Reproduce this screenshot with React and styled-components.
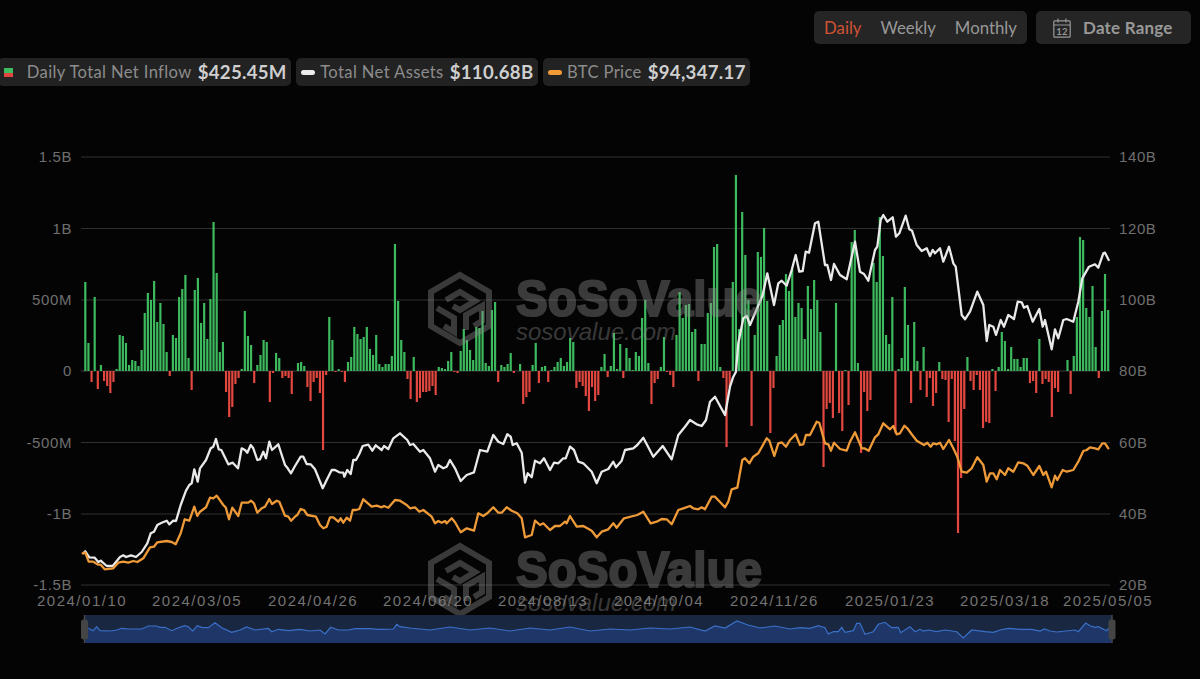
import React from "react";
import styled, { createGlobalStyle } from "styled-components";

const GlobalStyle = createGlobalStyle`
  html, body {
    margin: 0;
    background: #040404;
  }
  body {
    font-family: Lato, "Open Sans", sans-serif;
    overflow: hidden;
  }
`;

const Page = styled.div`
  width: 1200px;
  height: 679px;
  display: flex;
  flex-direction: column;
  overflow: hidden;
`;
const Toolbar = styled.div`
  display: flex;
  justify-content: flex-end;
  gap: 9px;
  padding: 11px 9px 0 0;
`;
const Segment = styled.div`
  display: flex;
  align-items: center;
  gap: 19px;
  width: 213px;
  height: 33px;
  box-sizing: border-box;
  padding: 0 10px;
  background: #252525;
  border-radius: 5px;
`;
const SegmentItem = styled.span`
  font-size: 16.8px;
  color: ${(p) => (p.$active ? "#cf5234" : "#989898")};
`;
const DateButton = styled.div`
  display: flex;
  align-items: center;
  gap: 12px;
  width: 155px;
  height: 33px;
  box-sizing: border-box;
  padding-left: 17px;
  background: #252525;
  border-radius: 5px;
  font-size: 17px;
  font-weight: 700;
  letter-spacing: 0.2px;
  color: #989898;
`;
const Legend = styled.div`
  display: flex;
  gap: 5px;
  margin-top: 14px;
  margin-left: -2px;
`;
const LegendPill = styled.div`
  display: flex;
  align-items: center;
  height: 28px;
  padding: 0 4.75px;
  background: #222222;
  border-radius: 5px;
  white-space: nowrap;
`;
const Swatch = styled.span`
  flex: none;
  width: 9px;
  height: 9px;
  margin: 0 14px 0 1px;
  background: linear-gradient(#3fbb60 0 55%, #e0483f 55% 100%);
`;
const LineKey = styled.span`
  flex: none;
  width: 14px;
  height: 5px;
  margin-right: 5px;
  border-radius: 3px;
  background: ${(p) => p.$color};
`;
const LegendLabel = styled.span`
  font-size: 16.6px;
  letter-spacing: 0.365px;
  color: #8c8c8c;
`;
const LegendValue = styled.span`
  margin-left: 6px;
  font-size: 18.6px;
  font-weight: 700;
  letter-spacing: 0.3px;
  color: #cfcfcf;
`;
const Chart = styled.svg`
  display: block;
  flex: none;
`;
const GridLine = styled.line`
  stroke: ${(p) => (p.$zero ? "#3c3c3c" : "#303030")};
  stroke-width: 1;
`;
const Bar = styled.rect`
  fill: ${(p) => (p.$down ? "#e2483f" : "#3dba5e")};
`;
const AxisText = styled.text`
  font-family: "Liberation Sans", Arial, sans-serif;
  font-size: 15px;
  letter-spacing: 0.6px;
  fill: #6f6f6f;
`;
const DateText = styled(AxisText)`
  letter-spacing: 1.5px;
  fill: #737373;
`;
const Series = styled.polyline`
  fill: none;
  stroke: ${(p) => p.$color};
  stroke-width: 2.3;
  stroke-linejoin: round;
  stroke-linecap: round;
`;
const WatermarkName = styled.text`
  font-family: "Liberation Sans", Arial, sans-serif;
  font-size: 50px;
  font-weight: 700;
  fill: #8c8c8c;
  stroke: #8c8c8c;
  stroke-width: 2.2;
  opacity: 0.4;
`;
const WatermarkUrl = styled.text`
  font-family: "Liberation Sans", Arial, sans-serif;
  font-size: 24px;
  font-style: italic;
  fill: #8c8c8c;
  opacity: 0.38;
`;
const WatermarkMark = styled.g`
  fill: none;
  stroke: #8c8c8c;
  stroke-width: 6;
  opacity: 0.4;
`;

// bar heights in px from the zero line, one per trading day
const flows = [
  89,28,-11,74,-18,6,-10,-15,-22,-11,2,36,35,28,6,11,10,5,21,58,78,71,90,49,68,47,19,-5,36,33,74,82,96,13,-19,81,93,48,68,32,72,149,98,19,29,
  -21,-46,-36,-13,-7,2,60,35,26,-12,6,16,31,29,-31,-2,18,13,-7,-5,-7,-23,0,8,9,5,-16,-30,-11,-7,-22,-79,-4,54,31,-1,2,-1,-11,9,14,44,37,32,34,44,22,16,36,7,4,7,7,15,127,70,
  31,19,-8,-28,14,-31,-27,-21,-21,-20,-15,-24,4,3,2,10,19,-1,-2,20,42,31,21,11,44,43,60,8,5,61,69,-11,6,4,7,18,-2,0,7,-33,-26,-21,6,28,-12,4,5,-11,1,4,9,13,5,9,33,29,
  -17,-11,-15,-25,-40,-16,-30,-24,4,17,-6,5,38,2,27,-7,23,13,1,19,15,53,71,8,-33,-12,-8,4,34,-1,-4,-16,36,79,53,66,67,39,42,-10,27,27,58,68,124,127,4,-7,-76,-16,89,196,42,159,116,71,
  -55,36,119,114,143,70,-62,-17,15,46,51,97,80,102,54,68,63,32,85,62,91,71,39,-96,-38,-32,-47,68,-42,-60,1,-34,129,141,8,-82,-21,-40,-29,108,89,154,115,36,27,74,-62,2,13,84,46,-32,49,10,-19,24,-26,-7,-35,-22,9,-8,-9,-51,-8,
  -70,-162,-107,-38,14,-10,-19,-4,-19,-57,-51,-52,2,-20,4,39,30,2,24,12,12,4,13,13,-12,-10,-22,32,-13,-8,-11,-46,-17,-21,0,0,11,-23,15,54,134,131,63,54,85,24,-7,60,97,61,
];

// maps points read at 3x back to page px
const scale = (ox, oy, raw) => {
  const out = [];
  for (let i = 0; i < raw.length; i += 2) {
    out.push(`${(ox + raw[i] / 3).toFixed(1)},${(oy + raw[i + 1] / 3).toFixed(1)}`);
  }
  return out;
};

const netAssets = [
  ...scale(60, 430, [70,370,76,364,88,382,104,383,115,396,122,392,140,408,158,408,180,381,190,376,198,381,213,376,228,381,245,366,262,340,272,310,282,305,292,285,305,278,320,272,328,283,340,272,348,273,362,225,378,182,388,165,395,160,403,118,413,155,420,115,438,90,452,55,460,50,468,27,476,58,484,60,505,103,518,98,534,115,545,55,555,60,562,68,572,45,580,55,592,90,600,88,610,65,618,85,628,35,636,60,655,43,675,105,683,115,693,130,705,108,722,80,730,80,740,102,752,103,765,118,788,175,800,150,815,120,825,120,838,127,850,128,853,140,862,120,872,132,880,90,888,90,898,72,908,48,925,44,937,62,947,46,965,60,972,48,985,57,1000,25]),
  ...scale(400, 420, [0,40,22,60,30,75,40,72,60,95,70,90,90,115,105,155,115,135,130,145,140,140,150,120,165,145,182,183,200,165,222,157,240,90,262,95,280,45,295,65,310,72,322,43,332,50,338,75,350,70,365,98,375,188,383,160,395,172,405,122,420,130,432,115,450,150,462,128,475,130,490,115,497,115,510,80,522,90,535,125,550,130,575,155,590,190,605,155,625,147,640,125,648,142,665,122,675,90,700,85,712,75,730,53,760,110,788,78,815,118,835,45,855,20]),
  ...scale(400, 170, [870,750,890,763,905,768,918,750,930,695,945,680,975,735,990,650,1000,620,1008,605,1015,520,1030,445,1040,437]),
  ...scale(750, 170, [0,465,15,430,38,375,52,310,72,405,85,340,95,332,110,347,125,300,137,255,148,305,158,303,167,245,177,248,195,160,205,155,225,285,232,285,243,330,252,282,270,315,290,328,315,215,330,305,342,312,355,332,375,240,382,230,392,150,400,135,412,155,428,142,438,200,448,190,467,137,478,178,486,182,500,225,515,243,530,235,540,258,548,240,555,250,570,235,580,275,597,230,610,280,617,290,635,435,645,448,660,425,682,365,700,405,710,513,718,465,730,470,738,495,752,450,762,470,775,435,792,447,803,395,815,397,822,413,832,408,848,455,868,417,878,470,885,450,905,538,915,478,925,505,940,450,950,447,970,455,985,395,997,325,1017,290,1035,283,1045,293,1060,250,1065,248,1076,270]),
];

const btcPrice = [
  ...scale(60, 430, [68,370,76,368,86,395,100,395,115,404,122,404,134,418,160,415,175,398,190,395,205,398,220,393,232,396,250,385,270,352,282,350,292,337,320,333,335,336,347,343,362,310,374,268,388,272,403,230,412,258,420,245,438,232,450,203,460,205,470,197,490,225,497,232,507,268,517,233,535,258,545,218,565,218,573,212,582,220,592,248,605,235,615,230,628,207,636,222,650,212,658,215,675,257,685,260,693,272,705,260,712,255,722,237,732,240,742,255,768,260,780,285,790,295,800,290,810,262,820,262,835,275,842,265,850,278,860,263,870,272,878,240,888,240,898,237,910,208,935,230,950,227,965,232,972,228,985,233,1005,210]),
  ...scale(400, 420, [0,242,20,255,30,265,45,262,58,275,70,270,95,290,105,310,115,303,125,308,135,303,140,310,155,295,165,307,182,337,200,325,222,332,235,280,250,288,262,280,280,262,295,278,305,278,320,262,335,272,352,280,365,295,375,352,395,345,405,302,420,315,430,310,450,330,465,318,480,318,495,305,500,310,510,288,530,320,550,318,575,332,590,352,605,335,625,328,640,310,650,323,672,295,700,288,712,285,730,275,752,310,770,305,785,297,800,298,815,313,835,270,850,265,870,258,880,265,895,268,905,262,915,268,935,230,945,230,975,262,985,245,995,208,1012,203,1027,120,1035,115,1048,130,1060,110,1075,100,1100,55,1108,62]),
  ...scale(770, 400, [13,168,25,130,35,127,48,140,60,120,77,103,90,135,100,133,108,105,120,105,140,65,148,68,165,130,175,133,183,152,192,128,210,147,230,152,240,125,255,97,275,145,283,145,296,152,315,112,325,103,340,70,360,88,370,78,380,103,390,100,403,77,412,85,425,103,440,122,462,135,472,128,482,140,490,130,500,133,510,128,520,147,537,120,550,145,562,170,575,215,590,218,605,205,622,172,640,195,650,245,660,220,670,220,680,238,690,210,705,225,715,205,730,215,745,187,760,190,772,197,790,225,808,198,820,225,828,215,845,262,855,227,862,240,878,210,890,215,910,210,925,185,940,153,950,150,960,142,975,145,985,148,997,130,1005,130,1015,145]),
];

const brush = [
  ...scale(0, 580, [265,145,280,152,290,140,300,152,330,153,350,150,365,145,385,147,425,147,445,138,470,138,480,142,495,142,515,152,535,143,555,137,565,140,578,153,592,137,605,142,625,143,645,128,665,143,695,157,720,150,740,141,765,150,805,145,815,155,835,148,865,152,900,148,930,153,960,150,975,162,992,142,1015,150,1045,150,1065,146,1110,146,1135,148,1150,148,1180,147,1190,133,1200,140]),
  "410,628","430,630","450,627","470,630","490,628","510,631","530,628","550,630","570,627","590,631","610,629","630,630","650,628","670,629","690,627","705,631","715,626","725,628","737,621","748,625","760,628","775,626","790,629",
  ...scale(800, 580, [0,143,30,145,55,137,75,143,85,162,100,155,115,155,125,142,135,157,160,152,170,130,180,130,195,163,220,155,235,133,255,127,275,143,295,142,302,158,330,140,345,155,360,148,370,153,385,150,410,155,435,150,470,155,490,174,515,150,555,155,580,157,600,150,625,145,660,148,695,148,720,153,733,147,750,153,770,156,825,150,835,155,857,129,870,137,885,142,895,140,920,152,930,140]),
];

const leftTicks = [
  ["1.5B", 157], ["1B", 228.5], ["500M", 300], ["0", 371], ["-500M", 442.5], ["-1B", 514], ["-1.5B", 585],
];
const rightTicks = ["140B", "120B", "100B", "80B", "60B", "40B", "20B"];
const dates = [
  ["2024/01/10", 37], ["2024/03/05", 152], ["2024/04/26", 268], ["2024/06/20", 383], ["2024/08/13", 498],
  ["2024/10/04", 614], ["2024/11/26", 730], ["2025/01/23", 845], ["2025/03/18", 960], ["2025/05/05", 1063],
];

function Watermark({ dy }) {
  return (
    <g transform={`translate(0 ${dy})`}>
      <WatermarkMark transform="translate(428 272)">
        <path d="M32 3 L61 20 V54 L32 71 L3 54 V20 Z" />
        <path d="M18 28 L32 20 L47 29 L32 38 L25 34" />
        <path d="M9 36 L26 46 V60 L16 54" />
        <path d="M38 58 V43 L54 34 V49 L46 54" />
      </WatermarkMark>
      <WatermarkName x="516" y="316" textLength="246" lengthAdjust="spacingAndGlyphs">SoSoValue</WatermarkName>
      <WatermarkUrl x="516" y="340">sosovalue.com</WatermarkUrl>
    </g>
  );
}

function Brush() {
  const line = brush.join(" ");
  return (
    <g>
      <rect x="85" y="615" width="1027" height="28" fill="#1a2740" />
      <polygon points={`85,643 ${line} 1112,643`} fill="#1e3768" />
      <polyline points={line} fill="none" stroke="#3a70c8" strokeWidth="1.2" />
      {[84.5, 1112].map((x) => (
        <g key={x}>
          <line x1={x} x2={x} y1="615" y2="643" stroke="#4a4a4a" strokeWidth="1.4" />
          <rect x={x - 3.5} y="619.5" width="7" height="20" rx="2.5" fill="#454545" />
        </g>
      ))}
    </g>
  );
}

export default function App() {
  return (
    <Page>
      <GlobalStyle />
      <Toolbar>
        <Segment>
          <SegmentItem $active>Daily</SegmentItem>
          <SegmentItem>Weekly</SegmentItem>
          <SegmentItem>Monthly</SegmentItem>
        </Segment>
        <DateButton>
          <svg width="18" height="20" viewBox="0 0 18 20" fill="none" stroke="#989898" strokeWidth="1.2">
            <rect x="0.8" y="2.8" width="16.4" height="16.4" rx="1" />
            <path d="M0.8 7 H17.2 M5 0.5 V4.5 M13 0.5 V4.5" />
            <text x="9" y="16.8" fontFamily="Lato, sans-serif" fontSize="9.5" fontWeight="700" textAnchor="middle" fill="#989898" stroke="none">12</text>
          </svg>
          Date Range
        </DateButton>
      </Toolbar>

      <Legend>
        <LegendPill>
          <Swatch />
          <LegendLabel>Daily Total Net Inflow</LegendLabel>
          <LegendValue>$425.45M</LegendValue>
        </LegendPill>
        <LegendPill>
          <LineKey $color="#ececec" />
          <LegendLabel>Total Net Assets</LegendLabel>
          <LegendValue>$110.68B</LegendValue>
        </LegendPill>
        <LegendPill>
          <LineKey $color="#f29a35" />
          <LegendLabel>BTC Price</LegendLabel>
          <LegendValue>$94,347.17</LegendValue>
        </LegendPill>
      </Legend>

      <Chart width="1200" height="593" viewBox="0 86 1200 593">
        {leftTicks.map(([label, y]) => (
          <GridLine key={label} x1="81" x2="1110" y1={y} y2={y} $zero={label === "0"} />
        ))}
        {leftTicks.map(([label, y]) => (
          <AxisText key={label} x="72" y={y + 5} textAnchor="end">{label}</AxisText>
        ))}
        {rightTicks.map((label, i) => (
          <AxisText key={label} x="1119" y={leftTicks[i][1] + 5}>{label}</AxisText>
        ))}
        {dates.map(([label, x]) => (
          <DateText key={label} x={x} y="606">{label}</DateText>
        ))}

        {flows.map((h, i) =>
          h === 0 ? null : (
            <Bar
              key={i}
              x={84.2 + i * 3.128}
              y={h > 0 ? 371 - h : 371}
              width="2.2"
              height={Math.abs(h)}
              $down={h < 0}
            />
          )
        )}

        <Series points={netAssets.join(" ")} $color="#e9e9e9" />
        <Series points={btcPrice.join(" ")} $color="#ee9a38" />

        <Watermark dy={0} />
        <Watermark dy={271} />
        <Brush />
      </Chart>
    </Page>
  );
}
